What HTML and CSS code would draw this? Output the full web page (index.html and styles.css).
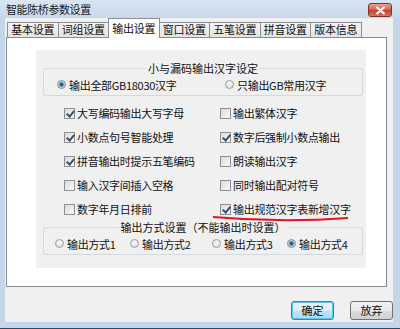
FILE: index.html
```html
<!DOCTYPE html>
<html lang="zh-CN">
<head>
    <meta charset="UTF-8">
    <title>智能陈桥参数设置</title>
    <link rel="stylesheet" href="styles.css">
</head>
<body>
<div class="window">
    <div class="titlebar">
        <span class="title">智能陈桥参数设置</span>
        <span class="close">
            <svg width="11" height="9" viewBox="0 0 11 9"><path d="M1.5 1 L9.5 8 M9.5 1 L1.5 8" stroke="#fff" stroke-width="2.2"/></svg>
        </span>
    </div>
    <div class="client">
        <div class="tabs">
            <div class="tab">基本设置</div>
            <div class="tab">词组设置</div>
            <div class="tab active">输出设置</div>
            <div class="tab">窗口设置</div>
            <div class="tab">五笔设置</div>
            <div class="tab">拼音设置</div>
            <div class="tab">版本信息</div>
        </div>
        <div class="panel">
            <div class="area">
                <div class="group first">
                    <div class="group-head"><span>小与漏码输出汉字设定</span></div>
                    <div class="group-body two">
                        <label class="opt"><span class="radio on"></span>输出全部GB18030汉字</label>
                        <label class="opt"><span class="radio"></span>只输出GB常用汉字</label>
                    </div>
                </div>
                <div class="checks">
                    <label class="opt"><span class="check on"></span>大写编码输出大写字母</label>
                    <label class="opt"><span class="check"></span>输出繁体汉字</label>
                    <label class="opt"><span class="check on"></span>小数点句号智能处理</label>
                    <label class="opt"><span class="check on"></span>数字后强制小数点输出</label>
                    <label class="opt"><span class="check on"></span>拼音输出时提示五笔编码</label>
                    <label class="opt"><span class="check"></span>朗读输出汉字</label>
                    <label class="opt"><span class="check"></span>输入汉字间插入空格</label>
                    <label class="opt"><span class="check"></span>同时输出配对符号</label>
                    <label class="opt"><span class="check"></span>数字年月日排前</label>
                    <label class="opt"><span class="check on"></span>输出规范汉字表新增汉字</label>
                </div>
                <div class="group">
                    <div class="group-head"><span>输出方式设置（不能输出时设置）</span></div>
                    <div class="group-body four">
                        <label class="opt"><span class="radio"></span>输出方式1</label>
                        <label class="opt"><span class="radio"></span>输出方式2</label>
                        <label class="opt"><span class="radio"></span>输出方式3</label>
                        <label class="opt"><span class="radio on"></span>输出方式4</label>
                    </div>
                </div>
                <svg class="mark" width="150" height="10" viewBox="0 0 150 10">
                    <path d="M2 3 Q70 9 137 4" stroke="#e3141b" stroke-width="2" fill="none"/>
                </svg>
            </div>
        </div>
        <div class="buttons">
            <div class="btn default">确定</div>
            <div class="btn">放弃</div>
        </div>
    </div>
    <div class="bottom"></div>
</div>
</body>
</html>
```

FILE: styles.css
```css
html,
body {
    margin: 0;
    padding: 0;
}

body {
    font: 11px "Noto Sans CJK SC", "Noto Sans CJK TC", sans-serif;
    color: #101010;
}

.window {
    width: 400px;
    height: 329px;
    background: #c3d6ea;
    display: flex;
    flex-direction: column;
    overflow: hidden;
}

.titlebar {
    height: 18px;
    display: flex;
    align-items: center;
    justify-content: space-between;
    padding: 0 8px 0 6px;
    background: linear-gradient(#d9e6f3, #c6d8eb);
}
.title {
    color: #1b1b1b;
    letter-spacing: -0.4px;
}
.close {
    width: 22px;
    height: 12px;
    margin-top: 2px;
    border: 1px solid #7c3327;
    border-radius: 3px;
    background: linear-gradient(#eaa394, #d0614d 50%, #c2402a 51%, #d9755f);
    display: flex;
    align-items: center;
    justify-content: center;
}

.client {
    flex: 1;
    margin: 0 7px 0 5px;
    background: #f0f0f0;
    display: flex;
    flex-direction: column;
}

.tabs {
    height: 19px;
    display: flex;
    align-items: flex-end;
    padding-left: 2px;
}
.tab {
    box-sizing: border-box;
    width: 51.5px;
    height: 15px;
    line-height: 13px;
    text-align: center;
    border: 1px solid #8c8e94;
    border-bottom: none;
    margin-right: -1px;
    background: linear-gradient(#f3f3f3, #e4e4e4);
    letter-spacing: -0.3px;
}
.tab.active {
    height: 19px;
    line-height: 18px;
    background: #fff;
    position: relative;
    margin-bottom: -1px;
    height: 20px;
    z-index: 1;
}

.panel {
    box-sizing: border-box;
    height: 250px;
    margin: 0 6px 0 1px;
    border: 1px solid #898c95;
    background: #fff;
    padding: 12px 20px 0 29px;
}

.area {
    position: relative;
    height: 218px;
    background: #f0f0f0;
    padding: 12px 3px 0 7px;
    box-sizing: border-box;
}

.group-head {
    height: 12px;
    display: flex;
    line-height: 12px;
}
.group-head::before,
.group-head::after {
    content: "";
    flex: 1;
    align-self: flex-end;
    height: 5px;
    border-top: 1px solid #d3d9de;
}
.group-head::before {
    border-left: 1px solid #d3d9de;
    border-top-left-radius: 3px;
}
.group-head::after {
    border-right: 1px solid #d3d9de;
    border-top-right-radius: 3px;
}
.group-head span {
    padding: 0 2px;
    color: #101010;
}
.group-body {
    height: 21px;
    border: 1px solid #d3d9de;
    border-top: none;
    border-radius: 0 0 3px 3px;
    display: grid;
    align-items: center;
}
.group-body.two {
    grid-template-columns: 168px 1fr;
    padding-left: 13px;
}
.group-body.four {
    grid-template-columns: 75px 82px 75px 1fr;
    padding-left: 11px;
}

.checks {
    display: grid;
    grid-template-columns: 156px 1fr;
    grid-auto-rows: 24px;
    padding: 5px 0 0 21px;
    align-items: center;
}

.opt {
    display: flex;
    align-items: center;
    white-space: nowrap;
    letter-spacing: -0.3px;
}

.radio {
    box-sizing: border-box;
    width: 9px;
    height: 9px;
    border-radius: 50%;
    border: 1px solid #9c9c9c;
    background: radial-gradient(circle at 50% 35%, #fbfbfb, #d6d6d6);
    margin-right: 3px;
}
.radio.on {
    background: radial-gradient(circle, #1d4b6e 0, #2f6d96 30%, #a9cbe2 55%, #e8e8e8 80%);
    border-color: #7b8a96;
}

.check {
    box-sizing: border-box;
    width: 11px;
    height: 11px;
    border: 1px solid #8e8f8f;
    background: linear-gradient(135deg, #dcdcdc, #f8f8f8);
    margin-right: 2px;
    position: relative;
}
.check.on::after {
    content: "";
    position: absolute;
    left: 3px;
    top: 0;
    width: 3px;
    height: 6px;
    border: solid #3d4f6b;
    border-width: 0 2px 2px 0;
    transform: rotate(40deg);
}

.mark {
    position: absolute;
    left: 175px;
    top: 164px;
}

.buttons {
    display: flex;
    justify-content: flex-end;
    gap: 16px;
    padding-top: 14px;
}
.btn {
    box-sizing: border-box;
    width: 43px;
    height: 19px;
    line-height: 17px;
    text-align: center;
    border: 1px solid #707070;
    border-radius: 3px;
    background: linear-gradient(#f4f4f4, #e9e9e9 50%, #dcdcdc 51%, #d0d0d0);
}
.btn.default {
    border-color: #3c7fb1;
    background: linear-gradient(#e9f6fd, #d6eefb 50%, #bfe4f8 51%, #a7d9f5);
    box-shadow: inset 0 0 0 1px #5bc4f0;
}

.bottom {
    height: 6px;
    border-bottom: 1px solid #2d4b68;
}
```
